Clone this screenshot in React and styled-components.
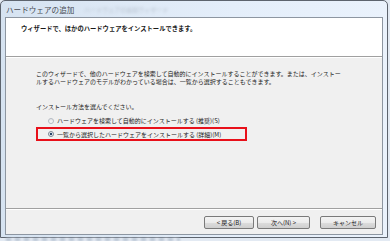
import React from "react";
import styled, { createGlobalStyle } from "styled-components";

const GlobalStyle = createGlobalStyle`
	html, body {
		margin: 0;
		padding: 0;
	}
	body {
		width: 390px;
		height: 241px;
		overflow: hidden;
		background: #e3eaf3;
		font-family: "Noto Sans CJK JP", "Noto Sans", sans-serif;
		color: #1a1a1a;
	}
`;

const Window = styled.div`
	width: 388px;
	height: 238px;
	box-sizing: border-box;
	border: 1px solid #5d646e;
	border-radius: 5px 5px 0 0;
	background: linear-gradient(to right, #d6e3f1, #e4eefa 60%, #eaf2fc);
	display: flex;
	flex-direction: column;
`;

const TitleBar = styled.div`
	height: 16px;
	padding-left: 5px;
	display: flex;
	align-items: center;
	gap: 10px;
	font-size: 7.6px;
	color: #474b52;
	white-space: nowrap;
`;

const Ghost = styled.span`
	color: #b6c0cd;
	filter: blur(1.4px);
	font-size: 6px;
`;

const Panel = styled.div`
	flex: 1;
	margin: 0 4px 2px;
	border: 1px solid #8d96a1;
	display: flex;
	flex-direction: column;
	background: #f0f0f0;
`;

const Header = styled.div`
	height: 39px;
	background: #ffffff;
	border-bottom: 1px solid #a0a0a0;
	padding: 7px 0 0 15px;
	box-sizing: border-box;
	font-size: 6.3px;
	font-weight: bold;
	line-height: 8px;
	white-space: nowrap;
`;

const Body = styled.div`
	flex: 1;
	border-top: 1px solid #ffffff;
	border-bottom: 1px solid #a0a0a0;
	padding: 12px 0 0 30px;
	font-size: 6px;
	white-space: nowrap;
`;

const Para = styled.p`
	margin: 0;
	line-height: 8px;
`;

const Prompt = styled.p`
	margin: 17px 0 0;
	line-height: 7px;
`;

const Choice = styled.label`
	display: flex;
	align-items: center;
	box-sizing: border-box;
	height: ${(p) => (p.$marked ? "14px" : "13px")};
	width: ${(p) => (p.$marked ? "211px" : "auto")};
	margin-top: ${(p) => (p.$marked ? "0" : "4px")};
	padding-left: ${(p) => (p.$marked ? "10px" : "12px")};
	border: ${(p) => (p.$marked ? "2px solid #e8101a" : "none")};
	gap: 3px;
`;

const Radio = styled.span`
	width: 6px;
	height: 6px;
	box-sizing: border-box;
	border-radius: 50%;
	border: 1px solid ${(p) => (p.$on ? "#7c8794" : "#b4bac2")};
	background: ${(p) =>
		p.$on
			? "radial-gradient(circle, #1d3550 0, #2b4f78 1.2px, #e9edf2 1.6px)"
			: "linear-gradient(#e4e6e9, #fbfbfb)"};
	flex-shrink: 0;
`;

const Footer = styled.div`
	height: 24px;
	border-top: 1px solid #ffffff;
	display: flex;
	align-items: center;
	justify-content: flex-end;
	padding-right: 6px;
	gap: 3px;
`;

const Button = styled.button`
	height: 13px;
	width: ${(p) => p.$w}px;
	margin-left: ${(p) => p.$gap || 0}px;
	padding: 0;
	border: 1px solid #7a7a7a;
	border-radius: 2px;
	background: linear-gradient(#f4f4f4 0, #ebebeb 50%, #dddddd 50%, #cfcfcf 100%);
	font-family: "Noto Sans CJK JP", "Noto Sans", sans-serif;
	font-size: 6px;
	line-height: 11px;
	color: #1a1a1a;
	white-space: nowrap;
`;

/* blurred glass reflection under the window */
const Reflection = styled.div`
	height: 3px;
	margin: 0 210px 0 6px;
	background: repeating-linear-gradient(
		to right,
		#b7c3d2 0,
		#b7c3d2 5px,
		#dfe6ef 5px,
		#dfe6ef 9px
	);
	filter: blur(0.8px);
`;

export default function App() {
	return (
		<>
			<GlobalStyle />
			<Window>
				<TitleBar>
					ハードウェアの追加
					<Ghost>ハードウェアの追加ウィザード</Ghost>
				</TitleBar>
				<Panel>
					<Header>ウィザードで、ほかのハードウェアをインストールできます。</Header>
					<Body>
						<Para>
							このウィザードで、他のハードウェアを検索して自動的にインストールすることができます。または、インストー
							<br />
							ルするハードウェアのモデルがわかっている場合は、一覧から選択することもできます。
						</Para>
						<Prompt>インストール方法を選んでください。</Prompt>
						<Choice>
							<Radio />
							ハードウェアを検索して自動的にインストールする (推奨)(S)
						</Choice>
						<Choice $marked>
							<Radio $on />
							一覧から選択したハードウェアをインストールする (詳細)(M)
						</Choice>
					</Body>
					<Footer>
						<Button $w={50}>&lt; 戻る(B)</Button>
						<Button $w={53}>次へ(N) &gt;</Button>
						<Button $w={56} $gap={7}>キャンセル</Button>
					</Footer>
				</Panel>
			</Window>
			<Reflection />
		</>
	);
}
